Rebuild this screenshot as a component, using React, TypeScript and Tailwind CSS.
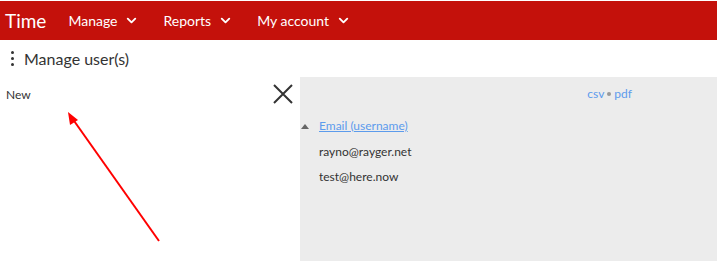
import { ChevronDown } from 'lucide-react'

export default function App() {
  const users = ['rayno@rayger.net', 'test@here.now']

  return (
    <div className="h-[261px] w-[717px] overflow-hidden bg-white font-['Lato',sans-serif] text-[#333]">
      {/* top nav */}
      <div className="mt-px flex h-[39px] items-center bg-[#c4110b] text-white">
        <span className="ml-[5px] text-[19px] leading-none">Time</span>
        <div className="ml-[22px] flex items-center gap-[24px] text-[14px]">
          {['Manage', 'Reports', 'My account'].map(m => (
            <div key={m} className="flex items-center gap-[7px]">
              <span>{m}</span>
              <ChevronDown size={15} strokeWidth={3} />
            </div>
          ))}
        </div>
      </div>

      {/* page title */}
      <div className="flex h-[37px] items-center">
        <div className="ml-[11px] flex flex-col gap-[3px]">
          <span className="h-[3px] w-[3px] rounded-full bg-[#333]" />
          <span className="h-[3px] w-[3px] rounded-full bg-[#333]" />
          <span className="h-[3px] w-[3px] rounded-full bg-[#333]" />
        </div>
        <span className="ml-[10px] text-[16px]">Manage user(s)</span>
      </div>

      <div className="flex h-[184px]">
        {/* left: form */}
        <div className="relative w-[300px]">
          <div className="flex justify-between pt-[7px]">
            <span className="ml-[6px] mt-[2px] text-[12px]">New</span>
            <svg className="mr-[7px]" width="20" height="20" viewBox="0 0 20 20" fill="none" stroke="#333" strokeWidth="2">
              <path d="M1 1 L19 19 M19 1 L1 19" />
            </svg>
          </div>
          <svg className="absolute left-0 top-0" width="300" height="184" viewBox="0 0 300 184">
            <line x1="159" y1="164" x2="72" y2="41" stroke="#ff0000" strokeWidth="2" />
            <path d="M68 35 L78 43 L70 48 Z" fill="#ff0000" />
          </svg>
        </div>

        {/* right: list */}
        <div className="flex-1 bg-[#ececec] pt-[8px] text-[12px]">
          <div className="flex w-[332px] items-center justify-end gap-[3px] text-[#5c9bec]">
            <span>csv</span>
            <span className="h-[4px] w-[4px] rounded-full bg-[#999]" />
            <span>pdf</span>
          </div>
          <div className="mt-[14px] flex items-center">
            <span className="ml-[1px] h-0 w-0 border-x-[4px] border-b-[5px] border-x-transparent border-b-[#666]" />
            <span className="ml-[10px] text-[#5c9bec] underline">Email (username)</span>
          </div>
          {users.map(u => (
            <div key={u} className="ml-[19px] mt-[9px] leading-[16px]">{u}</div>
          ))}
        </div>
      </div>
    </div>
  )
}
